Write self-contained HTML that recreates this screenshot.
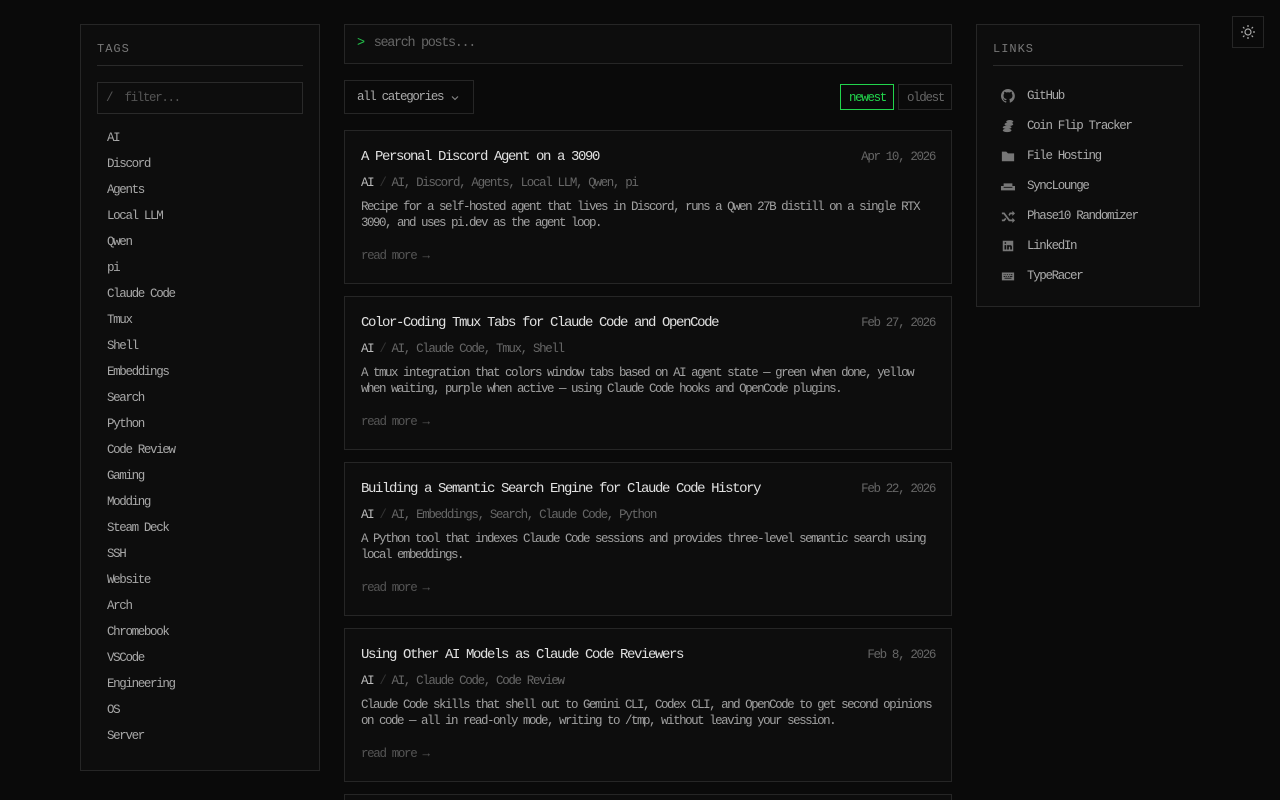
<!DOCTYPE html>
<html style="overflow:hidden;height:800px"><head><meta charset="utf-8"><style>
*{box-sizing:border-box;margin:0;padding:0}
body{width:1280px;height:800px;overflow:hidden;background:#0a0a0a;font-family:"Liberation Mono","DejaVu Sans Mono",monospace;font-size:12.5px;letter-spacing:-1.35px;color:#9a9a9a;position:relative;white-space:nowrap}
.panel{position:absolute;background:#0d0d0d;border:1px solid #262626}
.h{font-size:12px;letter-spacing:1px;color:#777;padding-top:1px;padding-bottom:9px;border-bottom:1px solid #2a2a2a}
#tags{left:80px;top:24px;width:240px;height:747px;padding:16px 16px}
.filter{margin-top:16px;height:32px;border:1px solid #2a2a2a;padding:8px 8px;color:#555}
.tl div{position:absolute;left:26px;top:1px;color:#a8a8a8}
#links{left:976px;top:24px;width:224px;height:283px;padding:16px}
.lk{position:absolute;left:24px;display:flex;align-items:center;color:#aaa}
.lk svg{width:14px;height:14px;margin-right:12px;fill:#777}
.search{position:absolute;left:344px;top:24px;width:608px;height:40px;border:1px solid #262626;background:#0d0d0d;padding:11px 12px;font-size:13.5px;color:#666}
.search b{color:#22c24a;font-weight:normal;margin-right:10px}
.cat{position:absolute;left:344px;top:80px;width:130px;height:34px;border:1px solid #262626;padding:9px 12px;color:#aaa}
.btn{position:absolute;top:84px;height:26px;padding:6px 8px;border:1px solid #262626;color:#666}
.card{position:absolute;left:344px;width:608px;height:154px;border:1px solid #262626;background:#0d0d0d}
.t{position:absolute;left:16px;top:18px;font-size:14px;letter-spacing:-1.4px;color:#e0e0e0}
.d{position:absolute;right:16px;top:19px;color:#666}
.m{position:absolute;left:16px;top:45px;color:#666}.m b{color:#bbb;font-weight:normal}.m i{font-style:normal;color:#333;margin:0 6px}
.p{position:absolute;left:16px;top:68px;width:576px;line-height:16px;color:#a0a0a0;white-space:normal;letter-spacing:-1.5px}
.r{position:absolute;left:16px;top:118px;color:#555}
</style></head><body>
<div class="panel" id="tags"><div class="h">TAGS</div><div class="filter">/&nbsp; filter...</div>
<div class="tl">
<div style="top:106px">AI</div><div style="top:132px">Discord</div><div style="top:158px">Agents</div><div style="top:184px">Local LLM</div><div style="top:210px">Qwen</div><div style="top:236px">pi</div><div style="top:262px">Claude Code</div><div style="top:288px">Tmux</div><div style="top:314px">Shell</div><div style="top:340px">Embeddings</div><div style="top:366px">Search</div><div style="top:392px">Python</div><div style="top:418px">Code Review</div><div style="top:444px">Gaming</div><div style="top:470px">Modding</div><div style="top:496px">Steam Deck</div><div style="top:522px">SSH</div><div style="top:548px">Website</div><div style="top:574px">Arch</div><div style="top:600px">Chromebook</div><div style="top:626px">VSCode</div><div style="top:652px">Engineering</div><div style="top:678px">OS</div><div style="top:704px">Server</div>
</div></div>

<div class="search"><b>&gt;</b>search posts...</div>
<div class="cat">all categories<svg width="8" height="6" viewBox="0 0 8 6" style="position:absolute;left:106px;top:14px"><path d="M1 1.5 4 4.5 7 1.5" stroke="#888" stroke-width="1.1" fill="none"/></svg></div>
<div class="btn" style="left:840px;border-color:#22d44c;color:#22d44c;width:54px">newest</div>
<div class="btn" style="left:898px;width:54px">oldest</div>

<div class="card" style="top:130px"><div class="t">A Personal Discord Agent on a 3090</div><div class="d">Apr 10, 2026</div><div class="m"><b>AI</b><i>/</i>AI, Discord, Agents, Local LLM, Qwen, pi</div><div class="p">Recipe for a self-hosted agent that lives in Discord, runs a Qwen 27B distill on a single RTX 3090, and uses pi.dev as the agent loop.</div><div class="r">read more →</div></div>
<div class="card" style="top:296px"><div class="t">Color-Coding Tmux Tabs for Claude Code and OpenCode</div><div class="d">Feb 27, 2026</div><div class="m"><b>AI</b><i>/</i>AI, Claude Code, Tmux, Shell</div><div class="p">A tmux integration that colors window tabs based on AI agent state — green when done, yellow when waiting, purple when active — using Claude Code hooks and OpenCode plugins.</div><div class="r">read more →</div></div>
<div class="card" style="top:462px"><div class="t">Building a Semantic Search Engine for Claude Code History</div><div class="d">Feb 22, 2026</div><div class="m"><b>AI</b><i>/</i>AI, Embeddings, Search, Claude Code, Python</div><div class="p">A Python tool that indexes Claude Code sessions and provides three-level semantic search using local embeddings.</div><div class="r">read more →</div></div>
<div class="card" style="top:628px"><div class="t">Using Other AI Models as Claude Code Reviewers</div><div class="d">Feb 8, 2026</div><div class="m"><b>AI</b><i>/</i>AI, Claude Code, Code Review</div><div class="p">Claude Code skills that shell out to Gemini CLI, Codex CLI, and OpenCode to get second opinions on code — all in read-only mode, writing to /tmp, without leaving your session.</div><div class="r">read more →</div></div>
<div class="card" style="top:794px;height:6px;border-bottom:none"></div>

<div class="panel" id="links"><div class="h">LINKS</div>
<div class="lk" style="top:64px"><svg viewBox="0 0 16 16"><path d="M8 0a8 8 0 0 0-2.5 15.6c.4 0 .5-.2.5-.4v-1.5c-2.2.5-2.7-1-2.7-1-.4-.9-.9-1.2-.9-1.2-.7-.5.1-.5.1-.5.8.1 1.2.8 1.2.8.7 1.3 1.9.9 2.3.7.1-.5.3-.9.5-1.1-1.8-.2-3.6-.9-3.6-4 0-.9.3-1.6.8-2.1-.1-.2-.4-1 .1-2.1 0 0 .7-.2 2.2.8a7.5 7.5 0 0 1 4 0c1.5-1 2.2-.8 2.2-.8.4 1.1.2 1.9.1 2.1.5.6.8 1.3.8 2.1 0 3.1-1.9 3.8-3.7 4 .3.3.6.8.6 1.5v2.2c0 .2.1.5.6.4A8 8 0 0 0 8 0z"/></svg>GitHub</div>
<div class="lk" style="top:94px"><svg viewBox="0 0 16 16"><ellipse cx="7" cy="13" rx="5" ry="2"/><ellipse cx="7" cy="9.5" rx="5" ry="2"/><ellipse cx="9" cy="6" rx="5" ry="2"/><ellipse cx="10" cy="3" rx="4" ry="1.8"/></svg>Coin Flip Tracker</div>
<div class="lk" style="top:124px"><svg viewBox="0 0 16 16"><path d="M1 3h5l2 2h7v9H1z"/></svg>File Hosting</div>
<div class="lk" style="top:154px"><svg viewBox="0 0 16 16"><path d="M3 5h10v4H3zM0 8h3v2h10V8h3v5H0z"/></svg>SyncLounge</div>
<div class="lk" style="top:184px"><svg viewBox="0 0 16 16"><path d="M1 4h3l6 8h3v-2l3 3-3 3v-2h-4L3 6H1zM1 12h2l2-2 1 1.5L4 14H1zM10 4h3V2l3 3-3 3V6h-2L9.5 8 8.5 6.5z"/></svg>Phase10 Randomizer</div>
<div class="lk" style="top:214px"><svg viewBox="0 0 16 16"><path d="M2 2h12v12H2zM4 7v5h2V7zm0-2.5a1 1 0 1 0 2 0 1 1 0 0 0-2 0zM7 7v5h2V9.5c0-1 1.5-1 1.5 0V12h2V9c0-2.5-3-2.5-3.5-1.2V7z" fill-rule="evenodd"/></svg>LinkedIn</div>
<div class="lk" style="top:244px"><svg viewBox="0 0 16 16"><path d="M1 4h14v9H1zM3 6v1h1V6zm2 0v1h1V6zm2 0v1h1V6zm2 0v1h1V6zm2 0v1h2V6zM3 8v1h2V8zm3 0v1h1V8zm2 0v1h1V8zm2 0v1h3V8zM4 10v1h8v-1z" fill-rule="evenodd"/></svg>TypeRacer</div>
</div>

<div style="position:absolute;left:1232px;top:16px;width:32px;height:32px;border:1px solid #262626"><svg width="30" height="30" viewBox="0 0 30 30" style="position:absolute;left:0;top:0"><g stroke="#aaa" stroke-width="1.2" fill="none"><circle cx="15" cy="15" r="3"/><path d="M15 8v2M15 20v2M8 15h2M20 15h2M10 10l1.4 1.4M18.6 18.6 20 20M10 20l1.4-1.4M18.6 11.4 20 10"/></g></svg></div>
</body></html>
